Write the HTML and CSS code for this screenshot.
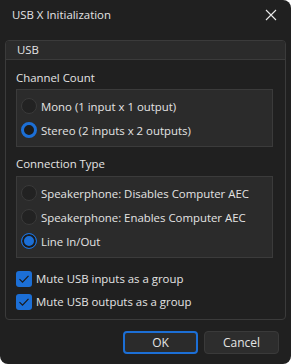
FILE: index.html
```html
<!DOCTYPE html>
<html lang="en">
<head>
    <meta charset="UTF-8">
    <meta name="viewport" content="width=device-width, initial-scale=1.0">
    <title>USB X Initialization</title>
    <link rel="stylesheet" href="styles.css">
</head>
<body>
    <div class="window">
        <div class="titlebar">
            <span class="title">USB X Initialization</span>
            <svg class="close" width="12" height="12" viewBox="0 0 12 12">
                <path d="M1 1 L11 11 M11 1 L1 11" stroke="#e8e8e8" stroke-width="1.1" fill="none"/>
            </svg>
        </div>

        <div class="content">
            <div class="groupbox">
                <div class="group-header">USB</div>
                <div class="group-body">
                    <div class="section-label">Channel Count</div>
                    <div class="option-box">
                        <label class="radio-row"><span class="radio"></span>Mono (1 input x 1 output)</label>
                        <label class="radio-row"><span class="radio checked"></span>Stereo (2 inputs x 2 outputs)</label>
                    </div>

                    <div class="section-label">Connection Type</div>
                    <div class="option-box">
                        <label class="radio-row"><span class="radio"></span>Speakerphone: Disables Computer AEC</label>
                        <label class="radio-row"><span class="radio"></span>Speakerphone: Enables Computer AEC</label>
                        <label class="radio-row"><span class="radio selected"></span>Line In/Out</label>
                    </div>

                    <div class="checks">
                        <label class="check-row">
                            <span class="checkbox">
                                <svg width="16" height="16" viewBox="0 0 16 16"><path d="M3.5 8.2 L6.5 11.2 L12.5 4.8" stroke="#1a1a1a" stroke-width="1.2" fill="none"/></svg>
                            </span>Mute USB inputs as a group
                        </label>
                        <label class="check-row">
                            <span class="checkbox">
                                <svg width="16" height="16" viewBox="0 0 16 16"><path d="M3.5 8.2 L6.5 11.2 L12.5 4.8" stroke="#1a1a1a" stroke-width="1.2" fill="none"/></svg>
                            </span>Mute USB outputs as a group
                        </label>
                    </div>
                </div>
            </div>

            <div class="buttons">
                <button class="btn primary">OK</button>
                <button class="btn">Cancel</button>
            </div>
        </div>
    </div>
</body>
</html>
```

FILE: styles.css
```css
* {
    box-sizing: border-box;
}

body {
    margin: 0;
    background: #ffffff;
    font-family: "Open Sans", "Noto Sans", sans-serif;
    font-size: 11.4px;
    color: #e4e4e4;
}

.window {
    width: 291px;
    height: 364px;
    background: #202020;
    border-radius: 0 8px 8px 8px;
    overflow: hidden;
}

.titlebar {
    height: 32px;
    display: flex;
    align-items: center;
    justify-content: space-between;
    padding: 0 14px 2px 12px;
}

.title {
    line-height: 16px;
}

.close {
    display: block;
}

.content {
    padding: 8px 5px 0 5px;
}

.groupbox {
    border: 1px solid #3b3b3b;
    border-radius: 4px;
    width: 281px;
}

.group-header {
    height: 19px;
    line-height: 18px;
    padding-left: 11px;
    background: #2b2b2b;
    border-bottom: 1px solid #3b3b3b;
    border-radius: 3px 3px 0 0;
}

.group-body {
    padding: 10px 12px 6px 10px;
}

.section-label {
    line-height: 16px;
    margin-bottom: 3px;
}

.option-box {
    background: #2b2b2b;
    border: 1px solid #3b3b3b;
    padding: 4px 4px;
    margin-bottom: 9px;
}

.option-box + .section-label {
    margin-bottom: 4px;
}

.radio-row,
.check-row {
    display: flex;
    align-items: center;
    height: 24px;
    gap: 4px;
    white-space: nowrap;
}

.radio {
    width: 16px;
    height: 16px;
    border-radius: 50%;
    background: #222222;
    border: 1px solid #3a3a3a;
    flex-shrink: 0;
}

.radio.checked {
    background: #1b1b1b;
    border: 3px solid #1c6fd6;
}

.radio.selected {
    background: #1c6fd6;
    border: 1px solid #1c6fd6;
    box-shadow: inset 0 0 0 2px #1b1b1b;
}

.checks {
    margin-top: 1px;
}

.check-row {
    height: 23px;
}

.checkbox {
    width: 16px;
    height: 16px;
    border-radius: 3px;
    background: #1c6fd6;
    flex-shrink: 0;
}

.checkbox svg {
    display: block;
}

.buttons {
    display: flex;
    justify-content: flex-end;
    gap: 6px;
    padding: 11px 7px 0 0;
}

.btn {
    width: 75px;
    height: 23px;
    font-family: inherit;
    font-size: 12px;
    color: #e4e4e4;
    background: #2d2d2d;
    border: 1px solid #3a3a3a;
    border-radius: 4px;
    padding: 0;
}

.btn.primary {
    background: #2b2b2b;
    border: 2px solid #1c6fd6;
}
```
